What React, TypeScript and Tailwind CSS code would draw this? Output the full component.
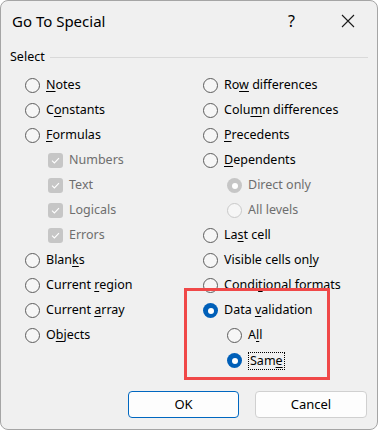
import React from 'react';

type Opt = { label: string; key?: number; sub?: boolean; kind?: 'radio' | 'check'; checked?: boolean; disabled?: boolean; focus?: boolean };

const leftOpts: Opt[] = [
  { label: 'Notes', key: 0 },
  { label: 'Constants', key: 1 },
  { label: 'Formulas', key: 0 },
  { label: 'Numbers', sub: true, kind: 'check', checked: true, disabled: true },
  { label: 'Text', sub: true, kind: 'check', checked: true, disabled: true },
  { label: 'Logicals', sub: true, kind: 'check', checked: true, disabled: true },
  { label: 'Errors', sub: true, kind: 'check', checked: true, disabled: true },
  { label: 'Blanks', key: 4 },
  { label: 'Current region', key: 8 },
  { label: 'Current array', key: 8 },
  { label: 'Objects', key: 1 },
];

const rightOpts: Opt[] = [
  { label: 'Row differences', key: 2 },
  { label: 'Column differences', key: 4 },
  { label: 'Precedents', key: 0 },
  { label: 'Dependents', key: 0 },
  { label: 'Direct only', sub: true, checked: true, disabled: true },
  { label: 'All levels', sub: true, disabled: true },
  { label: 'Last cell', key: 2 },
  { label: 'Visible cells only', key: 16 },
  { label: 'Conditional formats', key: 5 },
  { label: 'Data validation', key: 5, checked: true },
  { label: 'All', sub: true, key: 1 },
  { label: 'Same', sub: true, key: 3, checked: true, focus: true },
];

const Radio: React.FC<{ checked?: boolean; disabled?: boolean }> = ({ checked, disabled }) => {
  if (checked) {
    return (
      <span className={`w-[15px] h-[15px] rounded-full flex items-center justify-center shrink-0 ${disabled ? 'bg-[#c6c6c6]' : 'bg-[#005fb8]'}`}>
        <span className="w-[6px] h-[6px] rounded-full bg-white" />
      </span>
    );
  }
  return (
    <span className={`w-[15px] h-[15px] rounded-full border shrink-0 bg-[#f6f6f6] ${disabled ? 'border-[#c9c9c9]' : 'border-[#5c5c5c]'}`} />
  );
};

const Check: React.FC = () => (
  <span className="w-[15px] h-[15px] rounded-[3px] bg-[#c6c6c6] flex items-center justify-center shrink-0">
    <svg width="9" height="7" viewBox="0 0 9 7" fill="none">
      <path d="M1 3.6 L3.4 6 L8 1.2" stroke="#ffffff" strokeWidth="1.1" />
    </svg>
  </span>
);

const Label: React.FC<{ opt: Opt }> = ({ opt }) => {
  const { label, key } = opt;
  const text =
    key === undefined ? (
      label
    ) : (
      <>
        {label.slice(0, key)}
        <u className="underline-offset-[2px]">{label[key]}</u>
        {label.slice(key + 1)}
      </>
    );
  if (opt.focus) {
    return <span className="border border-dotted border-black px-[1px] leading-[16px]">{text}</span>;
  }
  return <span className={opt.disabled ? 'text-[#6e6e6e]' : 'text-black'}>{text}</span>;
};

const Row: React.FC<{ opt: Opt; subPad: string }> = ({ opt, subPad }) => (
  <div className={`h-[25px] flex items-center gap-[6px] ${opt.sub ? subPad : ''}`}>
    {opt.kind === 'check' ? <Check /> : <Radio checked={opt.checked} disabled={opt.disabled} />}
    <Label opt={opt} />
  </div>
);

export default function App() {
  return (
    <div className="w-[378px] h-[430px] bg-[#f0f0f0] border border-[#a5a5a5] rounded-[8px] relative text-[12.5px] text-black" style={{ fontFamily: '"Segoe UI", "Noto Sans", sans-serif' }}>
      <div className="h-[40px] flex items-center pl-[11px] pr-[22px]">
        <span className="text-[15px] flex-1">Go To Special</span>
        <span className="text-[16px] mr-[46px]">?</span>
        <svg width="14" height="14" viewBox="0 0 14 14">
          <path d="M1 1 L13 13 M13 1 L1 13" stroke="#1a1a1a" strokeWidth="1.1" />
        </svg>
      </div>

      <div className="mt-[7px] h-[18px] flex items-center pl-[9px] pr-[9px] gap-[5px]">
        <span>Select</span>
        <span className="flex-1 h-px bg-[#d9d9d9]" />
      </div>

      <div className="mt-[7px] flex">
        <div className="w-[202px] pl-[24px] flex flex-col">
          {leftOpts.map((o) => (
            <Row key={o.label} opt={o} subPad="pl-[23px]" />
          ))}
        </div>
        <div className="flex flex-col">
          {rightOpts.map((o) => (
            <Row key={o.label} opt={o} subPad="pl-[24px]" />
          ))}
        </div>
      </div>

      <div className="absolute left-[183px] top-[287px] w-[146px] h-[92px] border-[3px] border-[#f04848] pointer-events-none" />

      <div className="mt-[18px] flex justify-end gap-[16px] pr-[10px]">
        <button className="w-[111px] h-[27px] rounded-[4px] border border-[#0067c0] bg-[#fdfdfd] text-[13px]">OK</button>
        <button className="w-[112px] h-[27px] rounded-[4px] border border-[#d0d0d0] bg-[#fdfdfd] text-[13px]">Cancel</button>
      </div>
    </div>
  );
}
